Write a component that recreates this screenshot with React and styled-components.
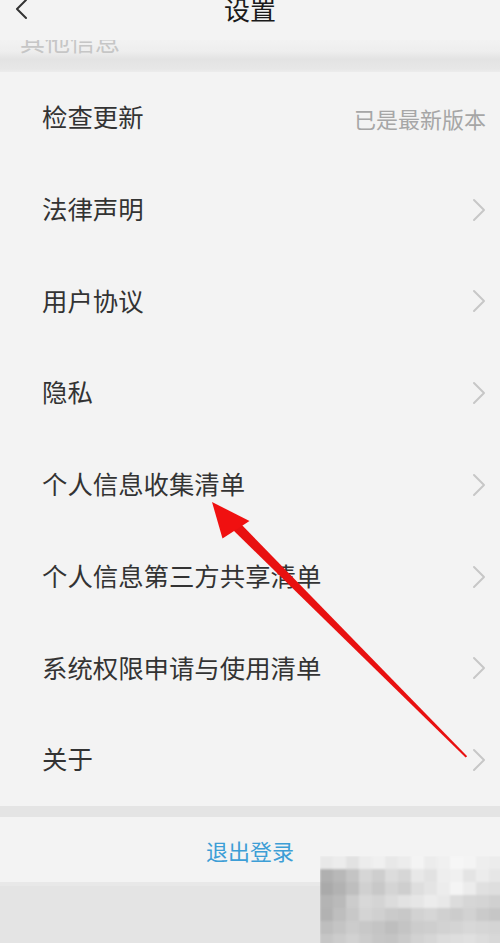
import React from "react";
import styled, { createGlobalStyle } from "styled-components";

const Global = createGlobalStyle`
  html, body { margin: 0; padding: 0; background: #e4e4e4; }
  body { font-family: "Noto Sans CJK SC", "Noto Sans", sans-serif; }
`;

const Page = styled.div`
  position: relative;
  width: 500px;
  height: 943px;
  overflow: hidden;
  background: #e4e4e4;
  display: flex;
  flex-direction: column;
`;

const NavBar = styled.div`
  height: 40px;
  flex: none;
  background: #f3f3f3;
  display: flex;
  align-items: center;
  justify-content: center;
  position: relative;
  z-index: 2;
`;

const Title = styled.div`
  font-size: 26px;
  color: #1a1a1a;
  line-height: 26px;
  margin-top: -22px;
`;

const BackBtn = styled.div`
  position: absolute;
  left: 12px;
  top: -2px;
  width: 18px;
  height: 24px;
  display: flex;
`;

const SectionHeader = styled.div`
  height: 32px;
  flex: none;
  overflow: hidden;
  position: relative;
  background: linear-gradient(#f2f2f2 0%, #eeeeee 35%, #e3e3e3 60%, #e7e7e7 90%, #ececec 100%);
`;

const SectionText = styled.div`
  font-size: 25px;
  line-height: 25px;
  color: #c6c6c6;
  padding-left: 20px;
  margin-top: -12px;
`;

const List = styled.div`
  background: #f3f3f3;
  display: flex;
  flex-direction: column;
  flex: none;
`;

const Row = styled.div`
  height: 91.75px;
  display: flex;
  align-items: center;
  justify-content: space-between;
  padding: 0 14px 0 42px;
`;

const Label = styled.div`
  font-size: 25.4px;
  color: #333333;
  line-height: 1;
  margin-top: -2px;
`;

const Value = styled.div`
  font-size: 22px;
  color: #a6a6a6;
  line-height: 1;
`;

const Gap = styled.div`
  height: 11px;
  flex: none;
  background: #e4e4e4;
`;

const Logout = styled.div`
  height: 65px;
  flex: none;
  background: #f3f3f3;
  display: flex;
  align-items: center;
  justify-content: center;
  font-size: 22px;
  color: #3d9ed6;
  border-bottom: 4px solid #e8e8e8;
`;

const Rest = styled.div`
  flex: 1;
  background: #e4e4e4;
`;

const Overlay = styled.svg`
  position: absolute;
  left: 0;
  top: 0;
  pointer-events: none;
`;

const Chevron = () => (
  <svg width="14" height="24" viewBox="0 0 14 24">
    <path d="M2 2 L12 12 L2 22" fill="none" stroke="#c7c7c7" strokeWidth="2" strokeLinecap="round" strokeLinejoin="round" />
  </svg>
);

const items = [
  { label: "检查更新", value: "已是最新版本" },
  { label: "法律声明" },
  { label: "用户协议" },
  { label: "隐私" },
  { label: "个人信息收集清单" },
  { label: "个人信息第三方共享清单" },
  { label: "系统权限申请与使用清单" },
  { label: "关于" },
];

const mosaic = [
  [232, 236, 226, 236, 240, 232, 236, 244, 236, 240, 246, 244, 238, 236],
  [176, 184, 196, 214, 206, 220, 214, 232, 226, 238, 240, 228, 236, 230],
  [170, 178, 190, 208, 200, 212, 206, 222, 228, 236, 244, 236, 224, 222],
  [180, 186, 204, 216, 212, 220, 226, 230, 236, 232, 220, 214, 212, 208],
  [178, 190, 200, 212, 208, 202, 200, 210, 214, 208, 204, 210, 202, 198],
  [190, 196, 204, 200, 196, 190, 196, 204, 206, 210, 212, 216, 214, 212],
  [198, 204, 210, 204, 198, 196, 202, 210, 214, 220, 222, 224, 220, 216],
];

export default function App() {
  return (
    <Page>
      <Global />
      <NavBar>
        <BackBtn>
          <svg width="18" height="24" viewBox="0 0 18 24">
            <path d="M14 2 L5 11 L14 20" fill="none" stroke="#333" strokeWidth="2" strokeLinecap="round" strokeLinejoin="round" />
          </svg>
        </BackBtn>
        <Title>设置</Title>
      </NavBar>
      <SectionHeader>
        <SectionText>其他信息</SectionText>
      </SectionHeader>
      <List>
        {items.map((it) => (
          <Row key={it.label}>
            <Label>{it.label}</Label>
            {it.value ? <Value>{it.value}</Value> : <Chevron />}
          </Row>
        ))}
      </List>
      <Gap />
      <Logout>退出登录</Logout>
      <Rest />
      <Overlay width="500" height="943" viewBox="0 0 500 943">
        <defs>
          <filter id="soft" x="0" y="0" width="1" height="1">
            <feGaussianBlur stdDeviation="1.2" />
          </filter>
        </defs>
        <g filter="url(#soft)">
          {mosaic.map((row, r) =>
            row.map((v, c) => (
              <rect
                key={r + "-" + c}
                x={320 + c * 13}
                y={856 + r * 13}
                width="13.5"
                height="13.5"
                fill={`rgb(${v},${v},${v})`}
              />
            ))
          )}
        </g>
        <polygon points="239.5,522.5 232.5,529.5 465.6,757.6 467.2,756.2" fill="#e81010" />
        <polygon points="212,502 222.5,538.5 249.5,521" fill="#f01010" />
      </Overlay>
    </Page>
  );
}
